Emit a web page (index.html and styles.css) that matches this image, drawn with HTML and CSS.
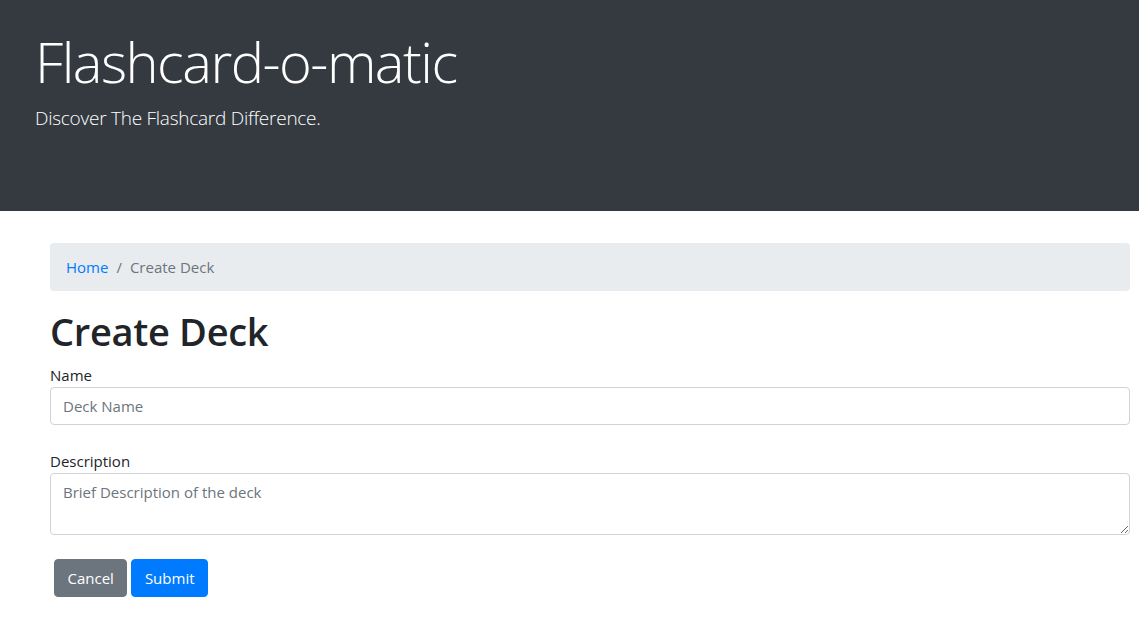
FILE: index.html
```html
<!DOCTYPE html>
<html lang="en">
<head>
<meta charset="utf-8">
<title>Flashcard-o-matic</title>
<link rel="stylesheet" href="styles.css">
</head>
<body>
<header class="jumbotron">
  <h1 class="display">Flashcard-o-matic</h1>
  <p class="lead">Discover The Flashcard Difference.</p>
</header>
<main class="container">
  <nav class="breadcrumb">
    <a class="crumb-link" href="#">Home</a>
    <span class="crumb-sep">/</span>
    <span class="crumb-active">Create Deck</span>
  </nav>
  <h2 class="page-title">Create Deck</h2>
  <form class="deck-form">
    <div class="form-group">
      <label class="form-label" for="name">Name</label>
      <input class="form-control" id="name" type="text" placeholder="Deck Name">
    </div>
    <div class="form-group">
      <label class="form-label" for="desc">Description</label>
      <textarea class="form-control textarea" id="desc" rows="2" placeholder="Brief Description of the deck"></textarea>
    </div>
    <div class="actions">
      <button type="button" class="btn btn-secondary">Cancel</button>
      <button type="submit" class="btn btn-primary">Submit</button>
    </div>
  </form>
</main>
</body>
</html>
```

FILE: styles.css
```css
* { box-sizing: border-box; }
body {
  margin: 0;
  font-family: "Open Sans", "Noto Sans", sans-serif;
  font-size: 16px;
  line-height: 1.5;
  color: #212529;
  background: #fff;
}
.jumbotron {
  background: #343a40;
  color: #fff;
  height: 211px;
  padding: 28px 35px 0;
  margin-bottom: 32px;
}
.display {
  margin: 0 0 8px;
  font-size: 56px;
  font-weight: 300;
  line-height: 1.2;
  letter-spacing: -1.5px;
}
.lead {
  margin: 0;
  font-size: 19px;
  font-weight: 300;
  line-height: 30px;
  letter-spacing: -0.25px;
}
.container {
  padding: 0 9px 0 50px;
}
.breadcrumb {
  background: #e9ecef;
  border-radius: 4px;
  padding: 12px 16px;
  margin-bottom: 16px;
  display: flex;
  font-size: 15px;
  line-height: 24px;
}
.crumb-link { color: #007bff; text-decoration: none; }
.crumb-sep { color: #6c757d; padding: 0 8px; }
.crumb-active { color: #6c757d; }
.page-title {
  margin: 0 0 8px;
  font-size: 38px;
  font-weight: 600;
  line-height: 48px;
  letter-spacing: -0.3px;
}
.form-group { margin-bottom: 24px; }
.form-label {
  display: block;
  font-size: 15px;
  line-height: 24px;
}
.form-control {
  display: block;
  width: 100%;
  height: 38px;
  padding: 6px 12px;
  font-family: inherit;
  font-size: 15px;
  line-height: 24px;
  color: #495057;
  background: #fff;
  border: 1px solid #ced4da;
  border-radius: 4px;
}
.form-control::placeholder { color: #6c757d; opacity: 1; }
.textarea { height: 62px; resize: both; }
.actions {
  display: flex;
  gap: 4px;
  padding-left: 4px;
}
.btn {
  height: 38px;
  padding: 6px 12.5px;
  font-family: inherit;
  font-size: 15px;
  line-height: 24px;
  color: #fff;
  border: 1px solid transparent;
  border-radius: 4px;
}
.btn-secondary { background: #6c757d; border-color: #6c757d; }
.btn-primary { background: #007bff; border-color: #007bff; }
```
